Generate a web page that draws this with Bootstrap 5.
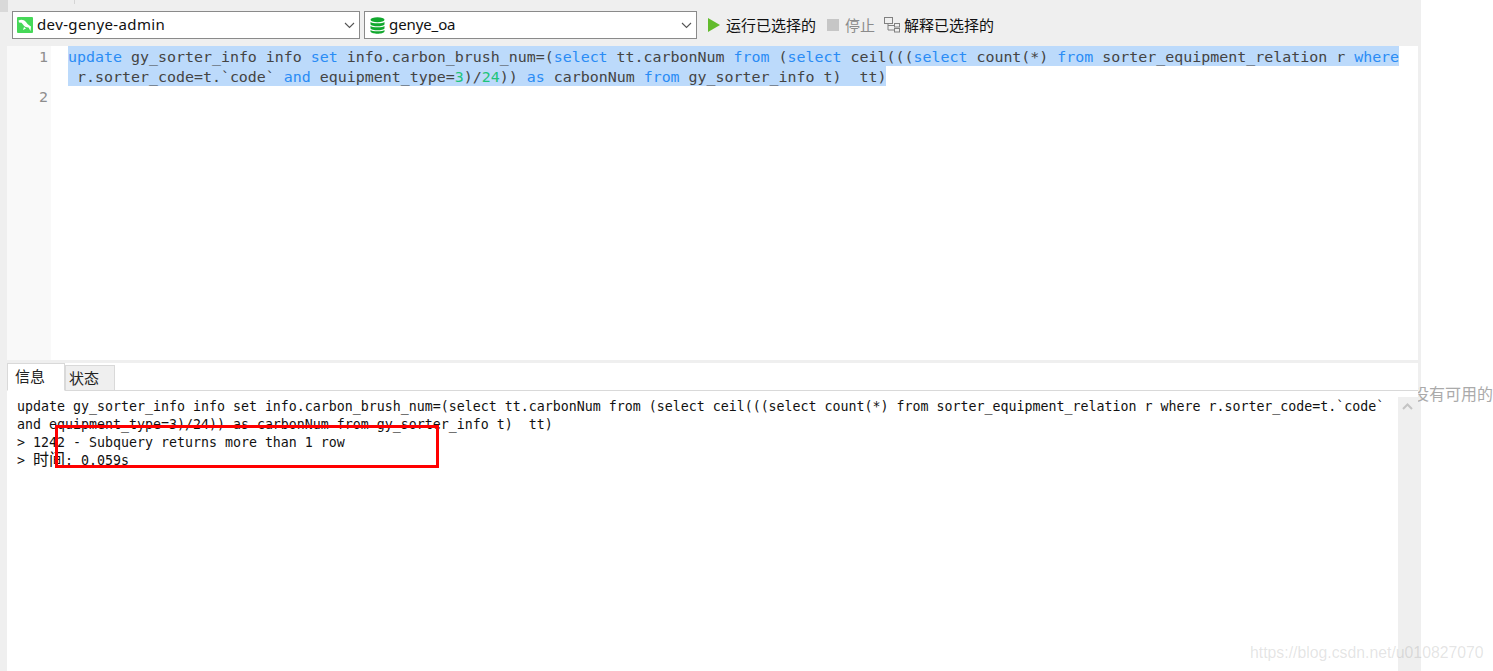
<!DOCTYPE html>
<html lang="zh">
<head>
<meta charset="utf-8">
<title>SQL</title>
<link href="https://cdn.jsdelivr.net/npm/bootstrap@5.3.0/dist/css/bootstrap.min.css" rel="stylesheet">
<style>
html,body{height:671px;overflow:hidden;background:#fff}
body{font-family:"Noto Sans","Noto Sans CJK SC",sans-serif;color:#111;position:relative}
.app-win{width:1421px;height:671px;background:#efefef;padding-right:3px}
.tool-bar{height:46px;padding:11px 0 7px 12px}
.top-notch{position:absolute;left:0;top:0;width:8px;height:12px;background:#d9d9d9}
.top-tick{position:absolute;left:74px;top:0;width:1px;height:4px;background:#d5d5d5}
.pick-box{height:28px;background:#fff;border:1px solid #8a8a8a;font-size:15px;line-height:18px;padding:0 4px 0 4px}
.pick-box .flex-grow-1{padding-bottom:2px}
.pick-a{width:348px;margin-right:4px;letter-spacing:.38px}
.pick-b{width:333px;margin-right:11px;letter-spacing:-.1px}
.pick-box svg.ico{margin-right:4px;flex:none}
.pick-b svg.ico{margin-right:4px;margin-left:1px}
.cjk-act{font-family:"Noto Sans CJK SC","Noto Sans",sans-serif;font-size:15px;line-height:20px;color:#111}
.cjk-off{color:#8b8b8b}
.edit-pane{height:314px;margin-left:7px;background:#fff}
.gut-col{width:44px;background:#f9f9f9;color:#8e8e8e;text-align:right;padding-right:3px;flex:none;line-height:22px}
.gut-col div{height:20px}
.gut-col .two{height:40px}
.mono-big{font-family:"DejaVu Sans Mono",monospace;font-size:14.955px;white-space:pre}
.code-col{padding-left:17px;color:#444}
.sel-row{display:block;width:max-content;background:#bcdafb;height:20px;line-height:22px}
.kw{color:#2a8cf5}
.nm{color:#1fc47a}
.low-pane{height:308px;margin-left:7px;margin-top:3px;background:#fff;position:relative}
.tab-row{height:28px;border-bottom:1px solid #d9d9d9;padding:0}
.tab-row .nav-link{font-family:"Noto Sans CJK SC",sans-serif;font-size:15px;line-height:20px;color:#222;border-radius:0;padding:0;margin:0}
.tab-on{width:58px;height:28px;background:#fff!important;border:1px solid #d9d9d9!important;border-bottom-color:#fff!important;padding:2px 0 0 7px!important}
.tab-off{width:50px;height:26px;margin-top:2px!important;background:#efefef!important;border:1px solid #d9d9d9!important;padding:2px 0 0 3px!important}
.out-wrap{height:280px}
.out-text{font-family:"DejaVu Sans Mono","Noto Sans CJK SC",monospace;font-size:13.29px;line-height:18px;white-space:pre;color:#111;padding:7px 0 0 10px}
.cjk-big{font-family:"Noto Sans CJK SC",sans-serif;font-size:16px;line-height:0}
.scroll-col{width:23px;margin-right:-3px;margin-top:6px;background:#efefef;padding:6px 0 0 4px}
.red-box{position:absolute;left:55px;top:425px;width:384px;height:43px;border:3px solid #f00}
.side-note{position:absolute;left:1418px;top:383px;width:75px;overflow:hidden;white-space:nowrap;direction:rtl;font-family:"Noto Sans CJK SC",sans-serif;font-size:16px;line-height:20px;color:#aaa}
.mark-url{position:absolute;left:1250px;top:643px;font-family:"Liberation Sans",sans-serif;font-size:15.8px;line-height:20px;color:rgba(120,120,120,.2)}
</style>
</head>
<body>
<div class="app-win d-flex flex-column">
  <div class="tool-bar d-flex align-items-center">
    <div class="pick-box pick-a d-flex align-items-center">
      <svg class="ico" width="16" height="16" viewBox="0 0 16 16"><rect width="16" height="16" rx="1" fill="#46d858"/><path d="M1.500 3.500C4 2 7 2.500 9 5c1 1.500 2 2.800 3.500 3.500l1.500 1-.5 4.500-2-3.500C9 10.500 7 9.500 6 7.500L4.500 5.800 2 5.500z" fill="#fff"/><path d="M7 10l-1 3 3-1.500z" fill="#fff"/></svg>
      <span class="flex-grow-1">dev-genye-admin</span>
      <svg width="11" height="7" viewBox="0 0 11 7"><path d="M1 1l4.500 4.500L10 1" fill="none" stroke="#555" stroke-width="1.100"/></svg>
    </div>
    <div class="pick-box pick-b d-flex align-items-center">
      <svg class="ico" width="15" height="17" viewBox="0 0 15 17"><g fill="#12a82e"><ellipse cx="7.500" cy="2.700" rx="7" ry="2.500"/><path d="M.5 5c1 1.800 13 1.800 14 0v2.500c-1 2.400-13 2.400-14 0z"/><path d="M.5 9c1 1.800 13 1.800 14 0v2.500c-1 2.400-13 2.400-14 0z"/><path d="M.5 13c1 1.800 13 1.800 14 0v1.500c-1 3-13 3-14 0z"/></g></svg>
      <span class="flex-grow-1">genye_oa</span>
      <svg width="11" height="7" viewBox="0 0 11 7"><path d="M1 1l4.500 4.500L10 1" fill="none" stroke="#555" stroke-width="1.100"/></svg>
    </div>
    <div class="d-flex align-items-center cjk-act">
      <svg width="12" height="14" viewBox="0 0 12 14" style="margin-right:6px"><path d="M0 0l12 7L0 14z" fill="#62bb2d"/></svg>
      <span>运行已选择的</span>
      <svg width="12" height="12" viewBox="0 0 12 12" style="margin:0 6px 0 11px"><rect width="12" height="12" fill="#c6c6c6"/></svg>
      <span class="cjk-off">停止</span>
      <svg width="16" height="16" viewBox="0 0 16 16" style="margin:0 4px 0 9px"><g fill="none" stroke="#808080"><rect x=".5" y=".5" width="8" height="6"/><rect x="10.500" y="6.500" width="5" height="3.500"/><rect x="10.500" y="11.500" width="5" height="3.500"/><path d="M4 7v6h6.500M4 8.500h6.500"/></g></svg>
      <span>解释已选择的</span>
    </div>
  </div>
  <div class="edit-pane d-flex">
    <div class="gut-col mono-big"><div class="two">1</div><div>2</div></div>
    <div class="code-col mono-big"><span class="sel-row"><span class="kw">update</span> gy_sorter_info info <span class="kw">set</span> info.carbon_brush_num=(<span class="kw">select</span> tt.carbonNum <span class="kw">from</span> (<span class="kw">select</span> ceil(((<span class="kw">select</span> count(*) <span class="kw">from</span> sorter_equipment_relation r <span class="kw">where</span></span><span class="sel-row"> r.sorter_code=t.`code` <span class="kw">and</span> equipment_type=<span class="nm">3</span>)/<span class="nm">24</span>)) <span class="kw">as</span> carbonNum <span class="kw">from</span> gy_sorter_info t)  tt)</span></div>
  </div>
  <div class="low-pane">
    <ul class="nav tab-row">
      <li class="nav-item"><a class="nav-link tab-on" href="#">信息</a></li>
      <li class="nav-item"><a class="nav-link tab-off" href="#">状态</a></li>
    </ul>
    <div class="out-wrap d-flex">
      <div class="out-text flex-grow-1">update gy_sorter_info info set info.carbon_brush_num=(select tt.carbonNum from (select ceil(((select count(*) from sorter_equipment_relation r where r.sorter_code=t.`code`
and equipment_type=3)/24)) as carbonNum from gy_sorter_info t)  tt)
&gt; 1242 - Subquery returns more than 1 row
&gt; <span class="cjk-big">时间</span>: 0.059s</div>
      <div class="scroll-col"><svg class="d-block" width="11" height="7" viewBox="0 0 11 7"><path d="M1 6l4.500-4.500L10 6" fill="none" stroke="#c4c4c4" stroke-width="2"/></svg></div>
    </div>
  </div>
</div>
<div class="top-notch"></div>
<div class="top-tick"></div>
<div class="side-note">没有可用的</div>
<div class="red-box"></div>
<div class="mark-url">https://blog.csdn.net/u010827070</div>
<script src="https://cdn.jsdelivr.net/npm/bootstrap@5.3.0/dist/js/bootstrap.bundle.min.js"></script>
</body>
</html>
